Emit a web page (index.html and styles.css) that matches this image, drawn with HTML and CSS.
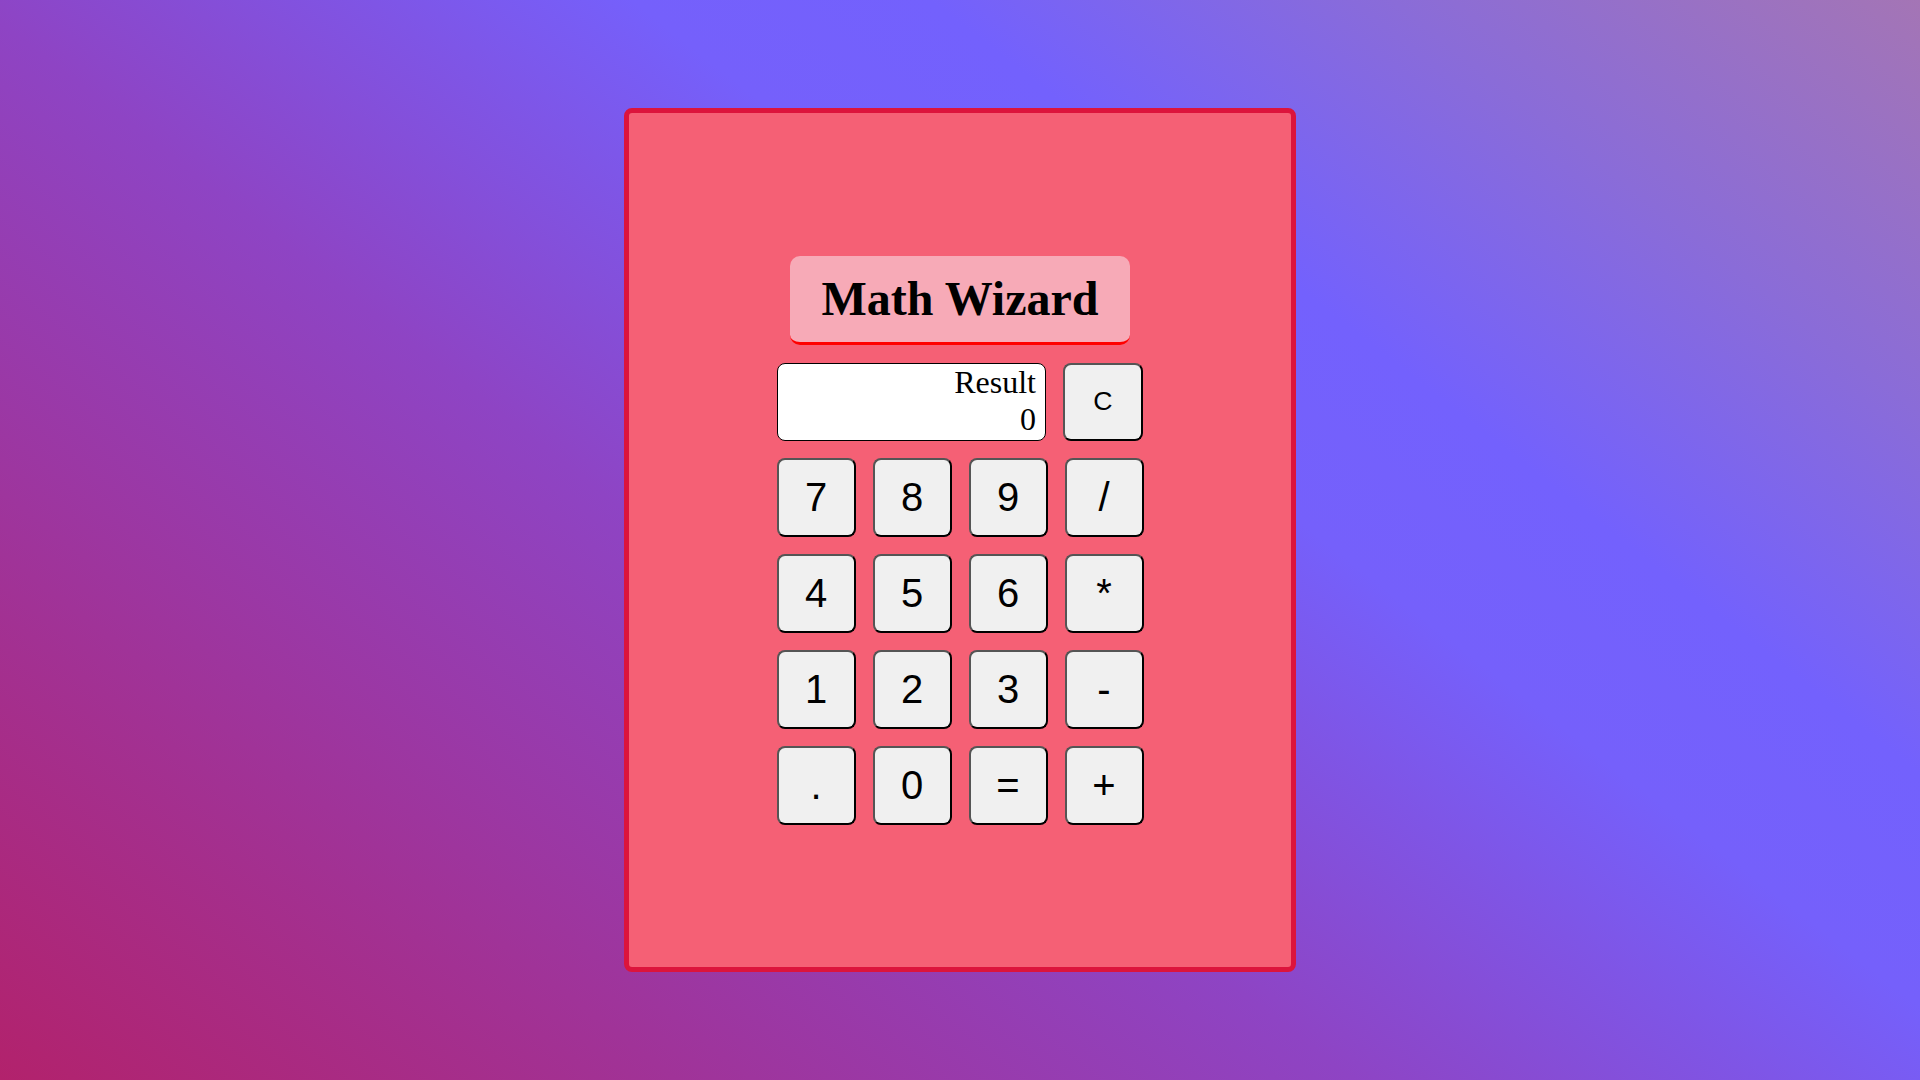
FILE: index.html
```html
<!DOCTYPE html>
<html lang="en">
<head>
<meta charset="utf-8">
<title>Math Wizard</title>
<link rel="stylesheet" href="styles.css">
</head>
<body>
<div class="calculator">
  <div class="content">
    <h1 class="title">Math Wizard</h1>
    <div class="top-row">
      <div class="display">
        <div class="label">Result</div>
        <div class="value">0</div>
      </div>
      <button class="btn btn-clear">C</button>
    </div>
    <div class="keys">
      <button class="btn">7</button>
      <button class="btn">8</button>
      <button class="btn">9</button>
      <button class="btn">/</button>
      <button class="btn">4</button>
      <button class="btn">5</button>
      <button class="btn">6</button>
      <button class="btn">*</button>
      <button class="btn">1</button>
      <button class="btn">2</button>
      <button class="btn">3</button>
      <button class="btn">-</button>
      <button class="btn">.</button>
      <button class="btn">0</button>
      <button class="btn">=</button>
      <button class="btn">+</button>
    </div>
  </div>
</div>
</body>
</html>
```
FILE: styles.css
```css
html, body {
  margin: 0;
  padding: 0;
  height: 100%;
}

body {
  width: 1920px;
  height: 1080px;
  display: flex;
  align-items: center;
  justify-content: center;
  background: linear-gradient(38deg, #b2226c 0%, #8e44c4 41%, #7560fb 61%, #7361fd 70%, #8a6cd8 84%, #a475b5 100%);
  font-family: "Liberation Serif", "Times New Roman", serif;
}

.calculator {
  box-sizing: border-box;
  width: 672px;
  height: 864px;
  background: #f56075;
  border: 5px solid #dc143c;
  border-radius: 8px;
  display: flex;
  align-items: center;
  justify-content: center;
}

.content {
  display: flex;
  flex-direction: column;
  align-items: center;
}

.title {
  box-sizing: border-box;
  margin: 0 0 18px 0;
  width: 340px;
  height: 89px;
  display: flex;
  align-items: center;
  justify-content: center;
  background: #f7aab7;
  border-bottom: 3px solid #ff0000;
  border-radius: 10px;
  font-family: "Liberation Serif", "Times New Roman", serif;
  font-weight: bold;
  font-size: 48px;
  color: #000;
  padding-bottom: 1px;
}

.top-row {
  display: flex;
  gap: 17px;
  margin-bottom: 17px;
}

.display {
  box-sizing: border-box;
  width: 269px;
  height: 78px;
  background: #fff;
  border: 1px solid #000;
  border-radius: 8px;
  padding: 0 9px 0 0;
  text-align: right;
  font-family: "Liberation Serif", "Times New Roman", serif;
  font-size: 32px;
  color: #000;
}

.display .label {
  line-height: 36px;
}

.display .value {
  line-height: 39px;
}

.keys {
  display: grid;
  grid-template-columns: repeat(4, 79px);
  grid-auto-rows: 79px;
  gap: 17px;
}

.btn {
  box-sizing: border-box;
  margin: 0;
  padding: 0;
  width: 79px;
  height: 79px;
  background: #f0f0f0;
  border: 2px solid;
  border-color: #555 #000 #000 #555;
  border-radius: 8px;
  font-family: "Liberation Sans", Arial, sans-serif;
  font-size: 40px;
  color: #000;
  display: flex;
  align-items: center;
  justify-content: center;
}

.btn-clear {
  width: 80px;
  height: 78px;
  font-size: 26.67px;
}
```
